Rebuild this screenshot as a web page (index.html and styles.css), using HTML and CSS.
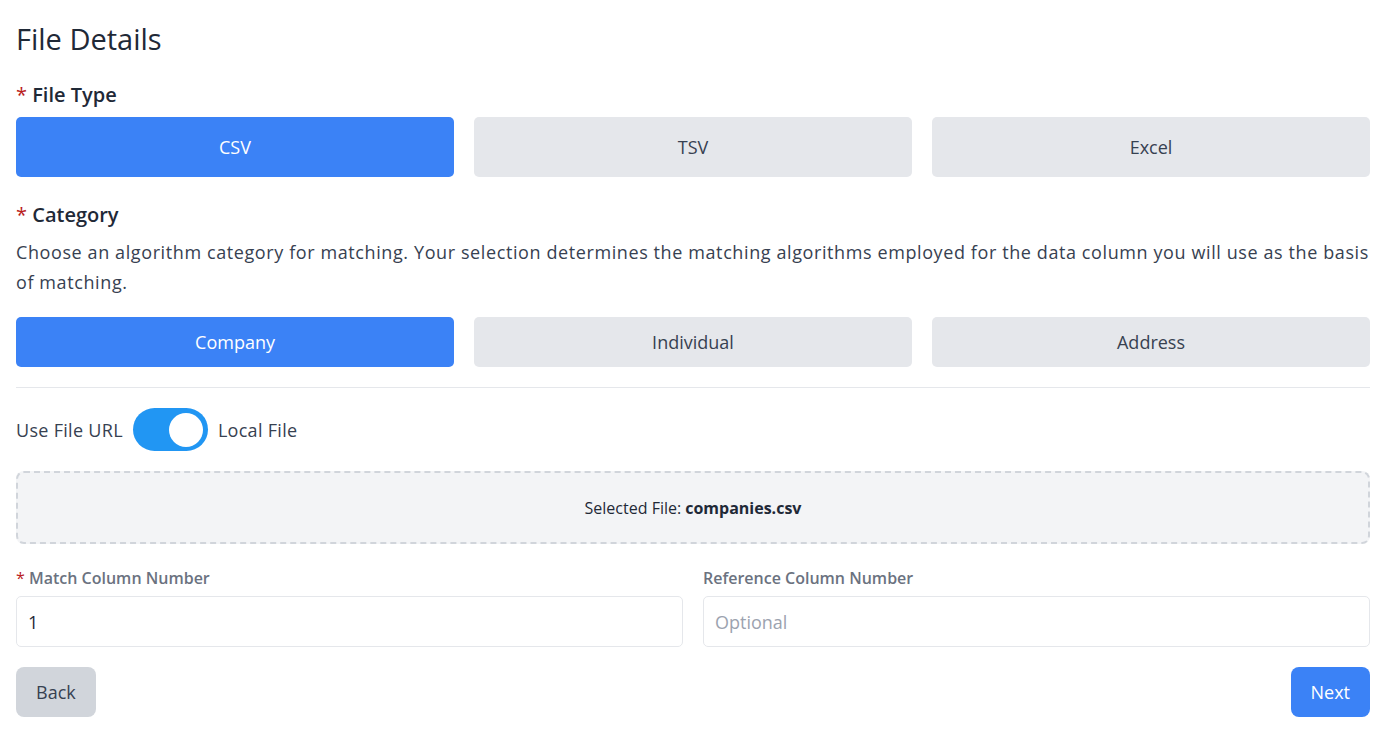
FILE: index.html
```html
<!DOCTYPE html>
<html lang="en">
<head>
  <meta charset="UTF-8">
  <meta name="viewport" content="width=device-width, initial-scale=1.0">
  <title>File Details</title>
  <link rel="stylesheet" href="styles.css">
</head>
<body>
  <div class="form">
    <h1 class="title">File Details</h1>

    <div class="field-label"><span class="req">*</span> File Type</div>
    <div class="choices tall">
      <button class="choice active">CSV</button>
      <button class="choice">TSV</button>
      <button class="choice">Excel</button>
    </div>

    <div class="field-label"><span class="req">*</span> Category</div>
    <p class="hint">Choose an algorithm category for matching. Your selection determines the matching algorithms employed for the data column you will use as the basis of matching.</p>
    <div class="choices">
      <button class="choice active">Company</button>
      <button class="choice">Individual</button>
      <button class="choice">Address</button>
    </div>

    <hr class="divider">

    <div class="source-toggle">
      <span>Use File URL</span>
      <label class="switch">
        <input type="checkbox" checked>
        <span class="slider"></span>
      </label>
      <span>Local File</span>
    </div>

    <div class="dropzone">Selected File: <strong>companies.csv</strong></div>

    <div class="columns">
      <div class="col-field">
        <label class="small-label"><span class="req">*</span> Match Column Number</label>
        <input type="text" class="text-input" value="1">
      </div>
      <div class="col-field">
        <label class="small-label">Reference Column Number</label>
        <input type="text" class="text-input" placeholder="Optional">
      </div>
    </div>

    <div class="actions">
      <button class="btn back">Back</button>
      <button class="btn next">Next</button>
    </div>
  </div>
</body>
</html>
```

FILE: styles.css
```css
body {
  margin: 0;
  font-family: "Open Sans", "Noto Sans", Arial, sans-serif;
  color: #1f2937;
  background: #ffffff;
}

.form {
  padding: 0 20px 0 16px;
}

.title {
  font-size: 29px;
  font-weight: 400;
  margin: 0;
  padding-top: 20px;
  line-height: 38px;
  color: #1f2937;
}

.field-label {
  font-size: 20px;
  font-weight: 600;
  margin-top: 24px;
  line-height: 28px;
  color: #1f2937;
}

.field-label:first-of-type {
  margin-top: 23px;
}

.req {
  color: #b91c1c;
  font-weight: 400;
}

.choices {
  display: grid;
  grid-template-columns: repeat(3, 1fr);
  gap: 20px;
  margin-top: 8px;
}

.choice {
  height: 50px;
  border: none;
  border-radius: 5px;
  background: #e5e7eb;
  color: #374151;
  font-family: inherit;
  font-size: 18px;
}

.tall .choice {
  height: 60px;
}

.choice.active {
  background: #3b82f6;
  color: #ffffff;
}

.hint {
  font-size: 18px;
  line-height: 30px;
  letter-spacing: 0.6px;
  margin: 8px 0 20px;
  color: #374151;
}

.divider {
  border: none;
  border-top: 1px solid #e5e7eb;
  margin: 20px 0;
}

.source-toggle {
  display: flex;
  align-items: center;
  gap: 10px;
  font-size: 18px;
  letter-spacing: 0.3px;
  color: #374151;
}

.switch {
  position: relative;
  width: 75px;
  height: 43px;
  display: inline-block;
}

.switch input {
  display: none;
}

.slider {
  position: absolute;
  inset: 0;
  border-radius: 22px;
  background: #2196f3;
}

.slider::before {
  content: "";
  position: absolute;
  width: 34px;
  height: 34px;
  border-radius: 50%;
  background: #ffffff;
  top: 4.5px;
  right: 5px;
}

.dropzone {
  margin-top: 20px;
  height: 73px;
  border: 2px dashed #d1d5db;
  border-radius: 8px;
  background: #f3f4f6;
  display: flex;
  align-items: center;
  justify-content: center;
  font-size: 16px;
  color: #1f2937;
  box-sizing: border-box;
}

.dropzone strong {
  font-weight: 700;
  margin-left: 4px;
}

.columns {
  display: grid;
  grid-template-columns: 1fr 1fr;
  gap: 20px;
  margin-top: 22px;
}

.col-field {
  display: flex;
  flex-direction: column;
}

.small-label {
  font-size: 16px;
  font-weight: 600;
  color: #6b7280;
  line-height: 24px;
  margin-bottom: 6px;
}

.text-input {
  height: 51px;
  box-sizing: border-box;
  border: 1px solid #e5e7eb;
  border-radius: 5px;
  padding: 0 11px;
  font-family: inherit;
  font-size: 18px;
  color: #1f2937;
}

.text-input::placeholder {
  color: #9ca3af;
}

.actions {
  display: flex;
  justify-content: space-between;
  margin-top: 20px;
}

.btn {
  height: 50px;
  padding: 0 20px;
  border: none;
  border-radius: 8px;
  font-family: inherit;
  font-size: 18px;
}

.back {
  background: #d1d5db;
  color: #374151;
}

.next {
  background: #3b82f6;
  color: #ffffff;
}
```
